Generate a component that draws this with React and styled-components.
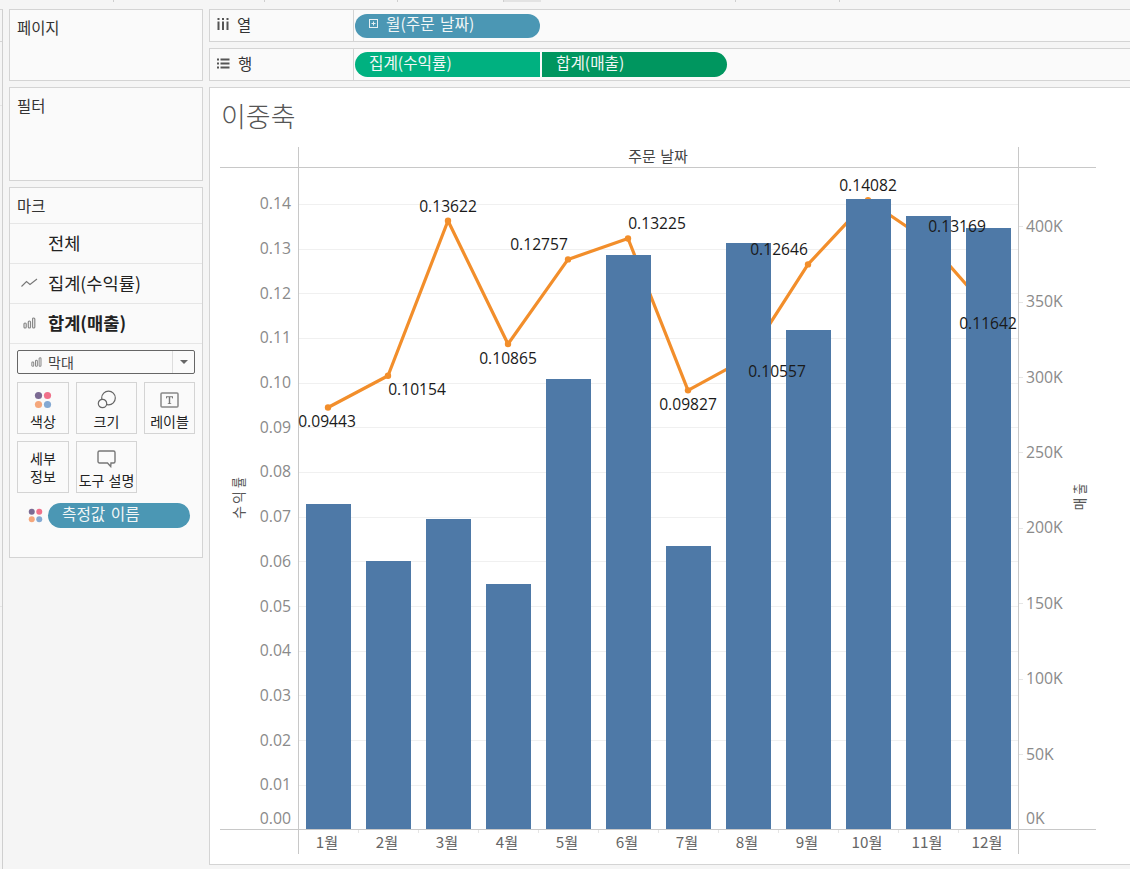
import React from "react";
import styled, { createGlobalStyle } from "styled-components";

const FONT = `"Noto Sans CJK KR", "Open Sans", sans-serif`;
const NUM = `"Open Sans", "Noto Sans CJK KR", sans-serif`;

const Global = createGlobalStyle`
  html, body { margin: 0; padding: 0; background: #f5f5f5; }
  body { font-family: ${FONT}; color: #333; overflow: hidden; }
`;

const Page = styled.div`
  width: 1130px; height: 869px; overflow: hidden; display: flex; flex-direction: column;
`;
const TopStrip = styled.div`height: 2px; flex: none; display: flex; margin-bottom: 7px;`;
const TopSeg = styled.span`
  width: ${p => p.$w}px; flex: none; box-sizing: border-box;
  background: ${p => p.$fill ? "#e3e3e3" : "transparent"};
  border-right: ${p => p.$fill ? "0" : "1px solid #cfcfcf"};
`;
const Workspace = styled.div`flex: 1; min-height: 0; display: flex;`;
const EdgePane = styled.div`
  width: 3px; flex: none; margin-right: 6px; box-sizing: border-box;
  border-top: 1px solid #d4d4d4; border-right: 1px solid #cfcfcf; padding-top: 31px;
`;
const EdgeMark = styled.div`height: 1px; background: ${p => p.$c}; margin-bottom: ${p => p.$gap}px;`;
const Columns = styled.div`flex: 1; min-width: 0; display: flex; gap: 6px;`;
const Side = styled.aside`width: 194px; flex: none; display: flex; flex-direction: column; gap: 6px;`;
const Panel = styled.section`
  box-sizing: border-box; height: ${p => p.$h}px; background: #fafafa;
  border: 1px solid #d4d4d4; font-size: 15.4px; display: flex; flex-direction: column;
`;
const PanelTitle = styled.div`padding: 7px 7px 0; line-height: 20px; color: #333;`;
const MarksHead = styled.div`height: 36px; box-sizing: border-box; padding: 7px 7px 0; line-height: 20px; border-bottom: 1px solid #e6e6e6;`;
const MarkRow = styled.div`
  height: 40px; box-sizing: border-box; border-bottom: 1px solid #e6e6e6; display: flex; align-items: center;
  padding: 0 0 2px 10px; gap: 10px; font-size: 17.6px; font-weight: ${p => p.$bold ? 700 : 400}; color: #222;
`;
const MarkIconSlot = styled.span`width: 18px; display: flex; justify-content: center; flex: none;`;
const Dropdown = styled.div`
  margin: 6px 7px 0; height: 24px; box-sizing: border-box; border: 1px solid #666; border-radius: 2px;
  display: flex; align-items: center; padding-left: 13px; gap: 6px; font-size: 14px; color: #444;
`;
const Caret = styled.span`
  margin-left: auto; width: 21px; height: 22px; border-left: 1px solid #ddd; display: flex; align-items: center; justify-content: center;
  &::after { content: ""; border-left: 4px solid transparent; border-right: 4px solid transparent; border-top: 4px solid #666; }
`;
const CardGrid = styled.div`
  margin: 8px 7px 0; display: grid; grid-template-columns: 52px 61px 51px; grid-auto-rows: 52px; gap: 7px;
`;
const CardButton = styled.div`
  box-sizing: border-box; border: 1px solid #d4d4d4; display: flex; flex-direction: column; align-items: center;
  justify-content: ${p => p.$center ? "center" : "flex-start"}; padding-top: ${p => p.$center ? 0 : 8}px;
  font-size: 14px; line-height: 18px; color: #222; text-align: center; white-space: nowrap; word-spacing: 1px;
`;
const CardIcon = styled.span`height: 18px; margin-bottom: 3px; display: flex; align-items: center; justify-content: center;`;
const MeasureRow = styled.div`margin: 10px 0 0 18px; display: flex; align-items: center; gap: 5px;`;
const Pill = styled.div`
  box-sizing: border-box; height: ${p => p.$h || 24}px; width: ${p => p.$w}px; background: ${p => p.$c};
  color: #f2f6f6; font-size: 15.7px; line-height: 20px; border-radius: ${p => p.$r || "13px"}; word-spacing: 2px;
  display: flex; align-items: center; padding: 0 0 4px ${p => p.$pl || 14}px; gap: 7px; flex: none;
`;
const Main = styled.main`flex: 1; min-width: 0; display: flex; flex-direction: column; gap: 6px;`;
const Shelf = styled.div`
  height: 33px; box-sizing: border-box; background: #fafafa; border: 1px solid #d4d4d4; border-right: 0; display: flex; align-items: stretch;
`;
const ShelfLabel = styled.div`
  width: 144px; flex: none; box-sizing: border-box; border-right: 1px solid #d4d4d4; display: flex; align-items: center; gap: 8px;
  padding: 0 0 3px 7px; font-size: 15.4px; color: #333;
`;
const ShelfPills = styled.div`display: flex; align-items: center; padding-left: 1px; gap: 2px;`;
const ChartCard = styled.section`
  height: 778px; box-sizing: border-box; background: #fff; border: 1px solid #d4d4d4; border-right: 0; display: flex; flex-direction: column;
`;
const Title = styled.h1`
  margin: 0; height: 59px; box-sizing: border-box; padding: 11px 0 0 11px; font-size: 27px; line-height: 34px; font-weight: 300; color: #555;
`;
const Plot = styled.svg`display: block; margin-left: 10px; flex: none;`;

const Dots = ({ s = 18 }) => (
  <svg width={s} height={s} viewBox="0 0 18 18">
    <circle cx="4.5" cy="4.5" r="3.6" fill="#7b6a93" />
    <circle cx="13.5" cy="4.5" r="3.6" fill="#f0718a" />
    <circle cx="4.5" cy="13.5" r="3.6" fill="#f5a77c" />
    <circle cx="13.5" cy="13.5" r="3.6" fill="#84a9d3" />
  </svg>
);
const BarsIcon = ({ w = 13 }) => (
  <svg width={w} height="12" viewBox="0 0 13 12" fill="none" stroke="#888" strokeWidth="1.2">
    <rect x="1" y="6" width="2.2" height="5" rx="1" />
    <rect x="5.3" y="4" width="2.2" height="7" rx="1" />
    <rect x="9.6" y="1" width="2.2" height="10" rx="1" />
  </svg>
);
const LineIcon = () => (
  <svg width="17" height="10" viewBox="0 0 17 10" fill="none" stroke="#777" strokeWidth="1.1">
    <path d="M0.5 8.5 L5.5 3.5 L9 6.5 L16 1" />
  </svg>
);
const ColsIcon = () => (
  <svg width="12" height="12" viewBox="0 0 12 12" fill="#555">
    <rect x="0.5" y="0" width="2" height="2" /><rect x="0.5" y="3.5" width="2" height="8.5" />
    <rect x="5" y="0" width="2" height="2" /><rect x="5" y="3.5" width="2" height="8.5" />
    <rect x="9.5" y="0" width="2" height="2" /><rect x="9.5" y="3.5" width="2" height="8.5" />
  </svg>
);
const RowsIcon = () => (
  <svg width="13" height="11" viewBox="0 0 13 11" fill="#555">
    <rect x="0" y="0.5" width="2" height="2" /><rect x="3.5" y="0.5" width="9" height="2" />
    <rect x="0" y="4.5" width="2" height="2" /><rect x="3.5" y="4.5" width="9" height="2" />
    <rect x="0" y="8.5" width="2" height="2" /><rect x="3.5" y="8.5" width="9" height="2" />
  </svg>
);
const PlusBox = () => (
  <svg width="10" height="10" viewBox="0 0 10 10" fill="none" stroke="#e8f0f3" strokeWidth="1">
    <rect x="0.5" y="0.5" width="8" height="8" /><path d="M2.5 4.5h4M4.5 2.5v4" />
  </svg>
);
const SizeIcon = () => (
  <svg width="20" height="20" viewBox="0 0 20 20" fill="none" stroke="#666" strokeWidth="1.2">
    <circle cx="11.5" cy="8" r="6.8" fill="#fafafa" />
    <circle cx="5.5" cy="13.5" r="4.2" fill="#fafafa" />
  </svg>
);
const TextIcon = () => (
  <svg width="20" height="16" viewBox="0 0 20 16">
    <rect x="1" y="1" width="17" height="14" rx="1" fill="none" stroke="#888" strokeWidth="1.5" />
    <path d="M6 4.2h7v2.2h-.7l-.4-1.2H10.2v6h1v.8H7.8v-.8h1v-6H7.1l-.4 1.2H6z" fill="#777" />
  </svg>
);
const TipIcon = () => (
  <svg width="19" height="18" viewBox="0 0 19 18" fill="none" stroke="#777" strokeWidth="1.4">
    <path d="M2.5 1h14a1.5 1.5 0 0 1 1.5 1.5v9a1.5 1.5 0 0 1-1.5 1.5H14l-.3 3.5L10.5 13H2.5A1.5 1.5 0 0 1 1 11.5v-9A1.5 1.5 0 0 1 2.5 1z" />
  </svg>
);

const W = 1130 - 220, H = 864 - 146;
const vals = [0.09443, 0.10154, 0.13622, 0.10865, 0.12757, 0.13225, 0.09827, 0.10557, 0.12646, 0.14082, 0.13169, 0.11642];
const tops = [504, 561, 519, 584, 379, 255, 546, 243, 330, 199, 216, 228];
const Y0 = 829.4, K = 4468;
const yOf = v => Y0 - v * K;
const xOf = i => 328 + i * 60;
const labelPos = [
  [327, 427], [417, 395], [448, 212], [508, 364], [539, 250], [657, 229],
  [688, 410], [777, 377], [779, 255], [868, 191], [957, 232], [988, 329],
];
const leftTicks = Array.from({ length: 15 }, (_, i) => i);
const rightTicks = Array.from({ length: 9 }, (_, i) => i);

const Chart = () => (
  <Plot width={W} height={H} viewBox={`220 146 ${W} ${H}`}>
    {leftTicks.slice(1).map(i => (
      <line key={i} x1="298" x2="1018" y1={Math.round(yOf(i / 100)) + 0.5} y2={Math.round(yOf(i / 100)) + 0.5} stroke="#f0f0f0" />
    ))}
    {rightTicks.slice(1).map(i => (
      <line key={i} x1="1018" x2="1023" y1={Math.round(Y0 - i * 75.4) + 0.5} y2={Math.round(Y0 - i * 75.4) + 0.5} stroke="#e6e6e6" />
    ))}
    <line x1="298.5" x2="298.5" y1="147" y2="854" stroke="#c8c8c8" />
    <line x1="1018.5" x2="1018.5" y1="147" y2="854" stroke="#c8c8c8" />
    <line x1="220" x2="1096" y1="167.5" y2="167.5" stroke="#c8c8c8" />
    <text x="658" y="162" textAnchor="middle" fontSize="15" wordSpacing="1" fill="#444" fontFamily={FONT}>주문 날짜</text>

    <polyline points={vals.map((v, i) => `${xOf(i)},${yOf(v)}`).join(" ")} fill="none" stroke="#f28e2b" strokeWidth="3.2" strokeLinejoin="round" />
    {vals.map((v, i) => <circle key={i} cx={xOf(i)} cy={yOf(v)} r="3.2" fill="#f28e2b" />)}
    {tops.map((t, i) => <rect key={i} x={306 + i * 60} y={t} width="45" height={829 - t} fill="#4e79a7" />)}
    <line x1="220" x2="1096" y1="829.5" y2="829.5" stroke="#c8c8c8" />
    {Array.from({ length: 11 }, (_, i) => (
      <line key={i} x1={358.5 + i * 60} x2={358.5 + i * 60} y1="830" y2="833" stroke="#e6e6e6" />
    ))}

    <g fontFamily={NUM} fontSize="15.8" fill="#8a8a8a" textAnchor="end">
      {leftTicks.map(i => (
        <text key={i} x="291" y={(i === 0 ? 818 : yOf(i / 100)) + 5.5}>{(i / 100).toFixed(2)}</text>
      ))}
    </g>
    <g fontFamily={NUM} fontSize="15.8" fill="#8a8a8a">
      {rightTicks.map(i => (
        <text key={i} x="1026" y={(i === 0 ? 818 : Y0 - i * 75.4) + 5.5}>{i * 50}K</text>
      ))}
    </g>
    <g fontFamily={FONT} fontSize="15.2" fill="#666" textAnchor="middle">
      {tops.map((_, i) => <text key={i} x={xOf(i) - 1} y="848">{i + 1}월</text>)}
    </g>
    <g fontFamily={NUM} fontSize="15.6" fill="#1a1a1a" textAnchor="middle">
      {vals.map((v, i) => <text key={i} x={labelPos[i][0]} y={labelPos[i][1]}>{v.toFixed(5)}</text>)}
    </g>

    <g fontFamily={FONT} fontSize="14" fill="#555" textAnchor="middle">
      <text transform="translate(244 512.5) rotate(-90)">수</text>
      <text transform="translate(244 497.5) rotate(-90)">익</text>
      <text transform="translate(244 482.5) rotate(-90) scale(0.85 1)">률</text>
      <text transform="translate(1085 504) rotate(-90)">매</text>
      <text transform="translate(1085 489) rotate(-90) scale(0.85 1)">출</text>
    </g>
  </Plot>
);

export default function App() {
  return (
    <Page>
      <Global />
      <TopStrip>
        <TopSeg $w={114} /><TopSeg $w={151} /><TopSeg $w={133} /><TopSeg $w={106} />
        <TopSeg $w={37} $fill /><TopSeg $w={195} /><TopSeg $w={104} />
      </TopStrip>
      <Workspace>
        <EdgePane>
          <EdgeMark $c="#d4d4d4" $gap={63} />
          <EdgeMark $c="#e6e6e6" $gap={500} />
          <EdgeMark $c="#e6e6e6" $gap={0} />
        </EdgePane>
        <Columns>
          <Side>
            <Panel $h={72}><PanelTitle>페이지</PanelTitle></Panel>
            <Panel $h={94}><PanelTitle>필터</PanelTitle></Panel>
            <Panel $h={371}>
              <MarksHead>마크</MarksHead>
              <MarkRow><MarkIconSlot />전체</MarkRow>
              <MarkRow><MarkIconSlot><LineIcon /></MarkIconSlot>집계(수익률)</MarkRow>
              <MarkRow $bold><MarkIconSlot><BarsIcon /></MarkIconSlot>합계(매출)</MarkRow>
              <Dropdown><BarsIcon w={11} />막대<Caret /></Dropdown>
              <CardGrid>
                <CardButton><CardIcon><Dots /></CardIcon><span>색상</span></CardButton>
                <CardButton><CardIcon><SizeIcon /></CardIcon><span>크기</span></CardButton>
                <CardButton><CardIcon><TextIcon /></CardIcon><span>레이블</span></CardButton>
                <CardButton $center>세부<br />정보</CardButton>
                <CardButton><CardIcon><TipIcon /></CardIcon><span>도구 설명</span></CardButton>
              </CardGrid>
              <MeasureRow><Dots s={15} /><Pill $w={142} $h={25} $c="#4b97b4" $pl={14}>측정값 이름</Pill></MeasureRow>
            </Panel>
          </Side>
          <Main>
            <Shelf>
              <ShelfLabel><ColsIcon />열</ShelfLabel>
              <ShelfPills><Pill $w={185} $c="#4b97b4" $pl={14}><PlusBox />월(주문 날짜)</Pill></ShelfPills>
            </Shelf>
            <Shelf>
              <ShelfLabel><RowsIcon />행</ShelfLabel>
              <ShelfPills>
                <Pill $w={185} $h={25} $c="#00b180" $r="13px 0 0 13px">집계(수익률)</Pill>
                <Pill $w={185} $h={25} $c="#00965f" $r="0 13px 13px 0">합계(매출)</Pill>
              </ShelfPills>
            </Shelf>
            <ChartCard>
              <Title>이중축</Title>
              <Chart />
            </ChartCard>
          </Main>
        </Columns>
      </Workspace>
    </Page>
  );
}
